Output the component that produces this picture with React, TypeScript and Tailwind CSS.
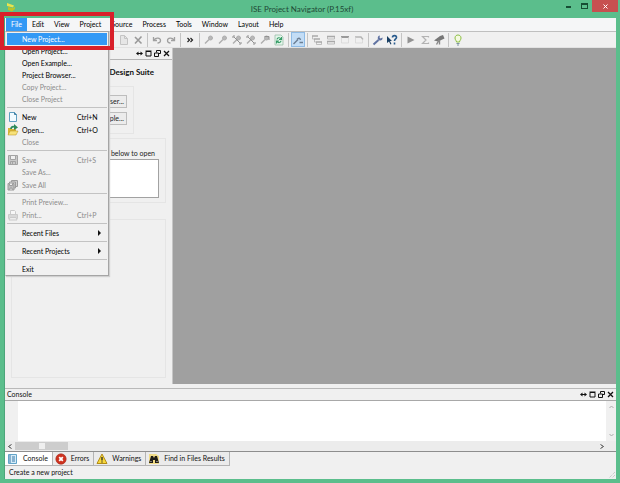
import type { ReactNode } from 'react';
import { clsx } from 'clsx';

const MENUS = ['File', 'Edit', 'View', 'Project', 'Source', 'Process', 'Tools', 'Window', 'Layout', 'Help'];

interface MenuEntry {
  label: string;
  shortcut?: string;
  disabled?: boolean;
  active?: boolean;
  submenu?: boolean;
  icon?: ReactNode;
}

function Icon({ children, className }: { children: ReactNode; className?: string }) {
  return (
    <svg
      className={clsx('h-3 w-3 shrink-0', className)}
      viewBox="0 0 12 12"
      fill="none"
      stroke="currentColor"
      aria-hidden="true"
    >
      {children}
    </svg>
  );
}

const newIcon = (
  <Icon>
    <path d="M2.5 1.5h5l2 2v7h-7z" fill="#f2fbff" stroke="#5f9fc0" />
    <path d="M7.5 1.5v2h2" stroke="#3e7ea3" />
  </Icon>
);

const openIcon = (
  <Icon>
    <path d="M1 4h3l1 1h4v6H1z" fill="#d9b534" stroke="none" />
    <path d="M3 7h8l-2 4H1z" fill="#f7e27a" stroke="#b48d1e" strokeWidth="0.5" />
    <path d="M4 5c0-2 2-3 4-2" stroke="#2b8a5a" strokeWidth="1.8" />
    <path d="M7 0l4 3.500L7 6z" fill="#2b8a5a" stroke="none" />
  </Icon>
);

const saveIcon = (
  <Icon className="text-[#a3a3a3]">
    <path d="M1.500 1.500h9v9h-9z" fill="#c9c9c9" />
    <path d="M3.500 1.500h5v4h-5z" fill="#f0f0f0" />
    <path d="M3.500 10.500v-3h5v3M5.500 8v2" />
  </Icon>
);

const saveAllIcon = (
  <Icon className="text-[#9c9c9c]">
    <path d="M4.500 1.500h6v6h-6z" fill="#d0d0d0" />
    <path d="M2.500 3h6v6h-6z" fill="#d0d0d0" />
    <path d="M1 4.500h6v6.500H1z" fill="#bcbcbc" />
    <path d="M2.500 4.500v2h3v-2M3 11V9h2v2" fill="#efefef" />
  </Icon>
);

const printIcon = (
  <Icon className="text-[#cacaca]">
    <path d="M3.500 5V1.500h4l1 1V5" fill="#f7f7f7" />
    <path d="M1.500 5.500h9v4h-9z" fill="#d8d8d8" />
    <path d="M3 8.500h6l1 2.500H2z" fill="#ededed" />
  </Icon>
);

const FILE_MENU: MenuEntry[][] = [
  [
    { label: 'New Project...', active: true },
    { label: 'Open Project...' },
    { label: 'Open Example...' },
    { label: 'Project Browser...' },
    { label: 'Copy Project...', disabled: true },
    { label: 'Close Project', disabled: true },
  ],
  [
    { label: 'New', shortcut: 'Ctrl+N', icon: newIcon },
    { label: 'Open...', shortcut: 'Ctrl+O', icon: openIcon },
    { label: 'Close', disabled: true },
  ],
  [
    { label: 'Save', shortcut: 'Ctrl+S', disabled: true, icon: saveIcon },
    { label: 'Save As...', disabled: true },
    { label: 'Save All', disabled: true, icon: saveAllIcon },
  ],
  [
    { label: 'Print Preview...', disabled: true },
    { label: 'Print...', shortcut: 'Ctrl+P', disabled: true, icon: printIcon },
  ],
  [{ label: 'Recent Files', submenu: true }],
  [{ label: 'Recent Projects', submenu: true }],
  [{ label: 'Exit' }],
];

function FileMenu() {
  return (
    <div
      role="menu"
      aria-label="File"
      className="absolute top-full left-0 z-10 w-[104px] border border-[#a5a5a5] border-l-[#e4e4e4] bg-[#f1f1f1] px-px pt-px shadow-[1px_1px_1px_#d0d0d0]"
    >
      {FILE_MENU.map((group, i) => (
        <div key={group[0].label}>
          {i > 0 && <div className="my-0.5 h-px bg-[#c3c3c3]" />}
          {group.map((item) => (
            <button
              key={item.label}
              type="button"
              role="menuitem"
              disabled={item.disabled}
              className={clsx(
                'flex w-full items-center text-[7px] leading-3',
                item.icon || group.length === 1 ? 'h-[13px]' : 'h-3',
                item.active && 'bg-[#3399f5] text-white',
                item.disabled ? 'text-[#8c8c8c]' : !item.active && 'text-black'
              )}
            >
              <span className="flex w-[15px] shrink-0">{item.icon}</span>
              <span className="flex-1 text-left whitespace-nowrap">{item.label}</span>
              {item.shortcut && <span className="w-[30px] text-left">{item.shortcut}</span>}
              {item.submenu && (
                <svg className="mr-1.5 h-[6px] w-[3px]" viewBox="0 0 3 6" aria-hidden="true">
                  <path d="M0 0l3 3-3 3z" fill="#111" />
                </svg>
              )}
            </button>
          ))}
        </div>
      ))}
    </div>
  );
}

function ToolButton({ label, children, active }: { label: string; children: ReactNode; active?: boolean }) {
  return (
    <button
      type="button"
      aria-label={label}
      className={clsx(
        'flex h-[15px] w-3.5 shrink-0 items-center justify-center',
        active && 'border border-[#8ebbe6] bg-[#c3ddf6]'
      )}
    >
      {children}
    </button>
  );
}

function Divider() {
  return <div className="mx-0.5 h-3.5 w-px shrink-0 bg-[#c4c4c4]" />;
}

function Magnifier({ children }: { children?: ReactNode }) {
  return (
    <Icon className="text-[#aeaeae]">
      <circle cx="7.500" cy="4" r="2" fill="#b8b8b8" />
      <path d="M6 5.500L2 9.500" strokeWidth="1.400" />
      {children}
    </Icon>
  );
}

function ToolBar() {
  return (
    <div className="flex h-4 items-center overflow-hidden border-b border-[#e2e2e2] bg-[#f0f0f0] pl-28" role="toolbar">
      <ToolButton label="Paste">
        <Icon className="text-[#c4c4c4]">
          <path d="M2.500 1.500h4l3 3v6h-7z" fill="#e6e6e6" />
          <path d="M6.500 1.500v3h3" />
        </Icon>
      </ToolButton>
      <ToolButton label="Delete">
        <Icon className="text-[#999]">
          <path d="M3 3l6.500 6.500M9.500 2.500L3 9.500" strokeWidth="1.600" />
        </Icon>
      </ToolButton>
      <Divider />
      <ToolButton label="Undo">
        <Icon className="text-[#a0a0a0]">
          <path d="M2.500 3v3.500H6M3 6c2-3 6.500-2 6.500.5C9.500 8.500 8 9 6.500 9" strokeWidth="1.300" />
        </Icon>
      </ToolButton>
      <ToolButton label="Redo">
        <Icon className="text-[#a0a0a0]">
          <path d="M9.500 3v3.500H6M9 6C7 3 2.500 4 2.500 6.500 2.500 8.500 4 9 5.500 9" strokeWidth="1.300" />
        </Icon>
      </ToolButton>
      <Divider />
      <ToolButton label="More tools">
        <Icon className="text-[#222]">
          <path d="M3.500 4l2 2-2 2M6.500 4l2 2-2 2" strokeWidth="1.200" />
        </Icon>
      </ToolButton>
      <Divider />
      <ToolButton label="Zoom in">
        <Magnifier />
      </ToolButton>
      <ToolButton label="Zoom out">
        <Magnifier />
      </ToolButton>
      <ToolButton label="Zoom to fit">
        <Magnifier>
          <path d="M2 4V2h2M10 8v2H8M3 3l6 6" stroke="#929292" />
        </Magnifier>
      </ToolButton>
      <ToolButton label="Zoom to box">
        <Magnifier>
          <path d="M2 4V2h2M10 8v2H8M3 3l6 6" stroke="#929292" />
        </Magnifier>
      </ToolButton>
      <ToolButton label="Zoom to selection">
        <Magnifier>
          <path d="M5.500 2.500H10V6" stroke="#929292" />
        </Magnifier>
      </ToolButton>
      <ToolButton label="Refresh">
        <Icon className="text-[#359c66]">
          <path d="M2 1h6l2 2v8H2z" fill="#e4f5ea" stroke="#8fb8a0" strokeWidth="0.700" />
          <path d="M4 5.500c0-2 3-2.500 4-.500M8.500 3v2.500H6M8 6.800c0 2-3 2.500-4 .5M3.500 9.500V7H6" strokeWidth="1.100" />
        </Icon>
      </ToolButton>
      <Divider />
      <ToolButton label="Highlight" active>
        <Icon className="text-[#6c7f94]">
          <path d="M1.500 10L6 5.500" strokeWidth="1.500" />
          <path d="M5 5.500c1.500-2 3-1.500 3.500.5M7.500 8.500h3.500" strokeWidth="1.400" />
        </Icon>
      </ToolButton>
      <Divider />
      <ToolButton label="Cascade">
        <Icon className="text-[#a9a9a9]">
          <path d="M1 2h6M3 5h6M5 8h6" strokeWidth="1.600" />
          <path d="M1.500 2v3H3M3.500 5v3H5M5.500 8v2.500h5V8" strokeWidth="0.700" />
        </Icon>
      </ToolButton>
      <ToolButton label="Tile horizontally">
        <Icon className="text-[#a9a9a9]">
          <path d="M2 2.500h8M2 7.500h8" strokeWidth="1.400" />
          <path d="M2.500 3v2h7V3M2.500 8v2h7V8" strokeWidth="0.700" />
        </Icon>
      </ToolButton>
      <ToolButton label="Tile vertically">
        <Icon className="text-[#909090]">
          <path d="M2 3h8" strokeWidth="1.800" />
          <path d="M2.500 3v6h7V3" stroke="#d2d2d2" strokeWidth="0.700" />
        </Icon>
      </ToolButton>
      <ToolButton label="Restore window">
        <Icon className="text-[#b4b4b4]">
          <path d="M2 3h6l2 2.500" strokeWidth="1.400" />
          <path d="M2.500 3v6h7V5.500" stroke="#d2d2d2" strokeWidth="0.700" />
        </Icon>
      </ToolButton>
      <Divider />
      <ToolButton label="Settings">
        <Icon className="text-[#6073a2]">
          <path d="M1.500 10.500L6.500 6" strokeWidth="2" />
          <path d="M8 1.500C5.500 1.500 5 5 7 6.200c2 .8 4-.5 3.500-2.700L8.500 4.500 7.500 3.500z" fill="currentColor" stroke="none" />
        </Icon>
      </ToolButton>
      <ToolButton label="What's this">
        <Icon>
          <path d="M1 2v7l2-1.500 1.500 3 1-.5-1.500-3H6z" fill="#183e63" stroke="none" />
          <path d="M6.500 3.500c0-2.500 4-2.500 4 0 0 1.500-2 1.500-2 3.500M8.500 8.500v2" stroke="#285b8d" strokeWidth="1.600" />
        </Icon>
      </ToolButton>
      <Divider />
      <ToolButton label="Run">
        <Icon>
          <path d="M2.500 2.500l7 3.500-7 3.500z" fill="#929292" stroke="none" />
        </Icon>
      </ToolButton>
      <ToolButton label="Summary">
        <Icon className="text-[#b3b3b3]">
          <path d="M9.500 3.500v-1h-6L7 6 3.500 9.500h6v-1" strokeWidth="1.200" />
        </Icon>
      </ToolButton>
      <ToolButton label="Analyze">
        <Icon>
          <path d="M1 6.500L7 2l3-1 1.500 3.500L5 7.500z" fill="#777" stroke="none" />
          <path d="M6 6L3.500 10.500M6.500 6v4.500" stroke="#888" strokeWidth="1.400" />
        </Icon>
      </ToolButton>
      <Divider />
      <ToolButton label="Tip of the day">
        <Icon>
          <path d="M4.500 8C4.500 6.500 3 6 3 4c0-4 6-4 6 0 0 2-1.500 2.500-1.500 4z" fill="#f4fadf" stroke="#8dbf45" />
          <path d="M4.500 9.500h3M5 11h2" stroke="#7d93a0" />
        </Icon>
      </ToolButton>
    </div>
  );
}

function PanelControls() {
  return (
    <div className="flex gap-0.5 text-[#111]">
      <button type="button" aria-label="Slide">
        <svg className="h-[7px] w-[7px]" viewBox="0 0 7 7" aria-hidden="true">
          <path d="M0 3.500L2.500 1.500v4zM7 3.500L4.500 1.500v4z" fill="currentColor" />
          <path d="M1 3.500h5" stroke="currentColor" />
        </svg>
      </button>
      <button type="button" aria-label="Maximize panel">
        <svg className="h-[7px] w-[7px]" viewBox="0 0 7 7" fill="none" stroke="currentColor" aria-hidden="true">
          <path d="M1 1.500h5v4.500H1zM.500 1h6" />
        </svg>
      </button>
      <button type="button" aria-label="Float panel">
        <svg className="h-[7px] w-[7px]" viewBox="0 0 7 7" fill="none" stroke="currentColor" aria-hidden="true">
          <path d="M2.500 2.500v-2h4v3H5M.500 3h4v3.500h-4z" />
        </svg>
      </button>
      <button type="button" aria-label="Close panel">
        <svg className="h-[7px] w-[7px]" viewBox="0 0 7 7" stroke="currentColor" aria-hidden="true">
          <path d="M1 1l5 5M6 1L1 6" strokeWidth="1.300" />
        </svg>
      </button>
    </div>
  );
}

function StartPanel() {
  return (
    <aside className="flex w-[168px] shrink-0 flex-col border-r border-[#c6c6c6] bg-[#f0f0f0]">
      <div className="flex h-3 items-center justify-end border-b border-[#b5b5b5] pr-0.5">
        <PanelControls />
      </div>
      <div className="flex flex-1 flex-col px-1.5 pb-1.5 text-[7px] leading-3 text-[#222]">
        <h1 className="mt-1.5 flex justify-end pr-3 text-[8px] font-bold whitespace-nowrap text-[#111]">
          Design Suite
        </h1>
        <div className="mt-2 mr-8 flex flex-col items-end gap-1 border border-[#e5e5e5] py-2 pr-1.5">
          <button type="button" className="h-[13px] border border-[#bdbdbd] bg-[#ececec] px-0.5 leading-[11px]">
            Browser...
          </button>
          <button type="button" className="h-[13px] border border-[#bdbdbd] bg-[#ececec] px-0.5 leading-[11px]">
            Example...
          </button>
        </div>
        <div className="mt-1 border border-[#e5e5e5] pt-2 pr-1.5 pb-1">
          <label htmlFor="recent" className="flex justify-end pr-1 whitespace-nowrap">
            list below to open
          </label>
          <textarea
            id="recent"
            readOnly
            className="block h-[39px] w-full resize-none border border-[#a2a2a2] bg-white"
          />
        </div>
        <div className="mt-4 flex-1 border border-[#e5e5e5]" />
      </div>
    </aside>
  );
}

const TABS = [
  {
    label: 'Console',
    icon: (
      <Icon>
        <path d="M1.500 1.500h8v9h-8z" fill="#d5ebf7" stroke="#62a4c9" />
        <path d="M3 2v8M5 4h3M5 6h3M5 8h3" stroke="#3879a8" />
      </Icon>
    ),
  },
  {
    label: 'Errors',
    icon: (
      <Icon>
        <circle cx="6" cy="6" r="5.200" fill="#ce321f" stroke="#a52a1c" strokeWidth="0.600" />
        <path d="M4.200 4.200l3.600 3.600M7.800 4.200L4.200 7.800" stroke="#fff" strokeWidth="1.800" />
      </Icon>
    ),
  },
  {
    label: 'Warnings',
    icon: (
      <Icon>
        <path d="M6 1l5 9.500H1z" fill="#f8d83b" stroke="#b28c16" />
        <path d="M6 4v3.500M6 8.500v1" stroke="#222" strokeWidth="1.300" />
      </Icon>
    ),
  },
  {
    label: 'Find in Files Results',
    icon: (
      <Icon>
        <path d="M1 1h7l3 2v8H1z" fill="#f1dc87" stroke="none" />
        <path d="M3 3h2l1 2 1-2h2l2 7H7V7H5v3H1z" fill="#201d18" stroke="none" />
        <path d="M2.500 8.500h1M8.500 8.500h1" stroke="#ddd" />
      </Icon>
    ),
  },
];

function ConsolePanel() {
  return (
    <section aria-label="Console" className="mt-1 border-t border-[#b9b9b9]">
      <div className="flex h-3 items-center justify-between border-b border-[#a8a8a8] pr-0.5 pl-0.5">
        <h2 className="text-[7px] text-[#111]">Console</h2>
        <PanelControls />
      </div>
      <div className="flex h-10 bg-white">
        <div className="w-[13px] bg-[#f0f0f0]" />
        <div className="flex-1" />
        <div className="flex w-2.5 flex-col items-center justify-between bg-[#f0f0f0] py-1 text-[#aaa]">
          <svg className="h-1 w-[5px]" viewBox="0 0 5 4" fill="none" stroke="currentColor" aria-hidden="true">
            <path d="M.500 3l2-2 2 2" />
          </svg>
          <svg className="h-1 w-[5px]" viewBox="0 0 5 4" fill="none" stroke="currentColor" aria-hidden="true">
            <path d="M.500 1l2 2 2-2" />
          </svg>
        </div>
      </div>
      <div className="flex h-[11px] items-center border-b border-[#8e8e8e] bg-[#ececec] pr-3">
        <svg className="mx-[3px] h-[5px] w-1" viewBox="0 0 4 5" fill="none" stroke="#444" aria-hidden="true">
          <path d="M3.500.500l-3 2 3 2" />
        </svg>
        <div className="flex h-2 w-[53px] items-center justify-center bg-[#cdcdcd]">
          <div className="h-1.5 w-1.5 bg-[#efefef]" />
        </div>
        <div className="flex-1" />
        <svg className="h-[5px] w-1" viewBox="0 0 4 5" fill="none" stroke="#444" aria-hidden="true">
          <path d="M.500.500l3 2-3 2" />
        </svg>
      </div>
      <div role="tablist" className="flex h-3.5 text-[7px] text-[#111]">
        {TABS.map((tab, i) => (
          <button
            key={tab.label}
            type="button"
            role="tab"
            aria-selected={i === 0}
            className={clsx(
              'flex items-center gap-1 border-r border-b border-[#b4b4b4] pr-1 pl-0.5 whitespace-nowrap',
              i === 0 ? 'bg-white' : 'bg-[#ebebeb]'
            )}
          >
            {tab.icon}
            {tab.label}
          </button>
        ))}
      </div>
    </section>
  );
}

export default function App() {
  return (
    <div className="flex min-h-screen flex-col bg-[#5bbe8c] font-[Lato,'Open_Sans',sans-serif]">
      <header className="flex h-[18px] items-start pl-1.5">
        <svg className="mt-0.5 h-2.5 w-2.5" viewBox="0 0 10 10" aria-hidden="true">
          <path d="M1 1l7 2.500-1 2-6-1.500z" fill="#e9e34d" />
          <path d="M2 5l5 1 2-1.500V7L6 9.500 2 8z" fill="#b7c52c" />
        </svg>
        <div className="flex-1 pl-7 text-center text-[8px] leading-[18px] text-[#1f4936]">
          ISE Project Navigator (P.15xf)
        </div>
        <div className="mr-0.5 flex h-3">
          <button type="button" aria-label="Minimize" className="flex w-4 items-end justify-center pb-1">
            <span className="h-0.5 w-[5px] bg-[#164d34]" />
          </button>
          <button type="button" aria-label="Maximize" className="flex w-4 items-center justify-center">
            <span className="h-[6px] w-[7px] border border-t-2 border-[#164d34]" />
          </button>
          <button type="button" aria-label="Close" className="flex w-[26px] items-center justify-center bg-[#c75050]">
            <svg className="h-[5px] w-[5px]" viewBox="0 0 5 5" stroke="#fff" aria-hidden="true">
              <path d="M.500.500l4 4M4.500.500l-4 4" />
            </svg>
          </button>
        </div>
      </header>

      <div className="mr-1 mb-1 ml-1 flex flex-1 flex-col border-l border-[#4da67b] bg-[#f0f0f0]">
        <nav className="relative flex h-3.5 border-b border-[#bfbfbf] bg-[#f5f6f7] pl-px text-[7px] text-black">
          {MENUS.map((menu) => (
            <button
              key={menu}
              type="button"
              className={clsx('px-[5px]', menu === 'File' && 'bg-[#3399f5] text-white')}
            >
              {menu}
            </button>
          ))}
          <FileMenu />
        </nav>
        <ToolBar />
        <div className="flex flex-1">
          <StartPanel />
          <main className="flex-1 bg-[#a0a0a0]" />
        </div>
        <ConsolePanel />
        <footer className="flex h-[13px] items-center justify-between pl-1 text-[7px] text-[#111]">
          <span>Create a new project</span>
          <svg className="h-2 w-2 self-end" viewBox="0 0 8 8" stroke="#bbb" aria-hidden="true">
            <path d="M7 1L1 7M7 4L4 7" strokeDasharray="1 1" />
          </svg>
        </footer>
      </div>

      {/* Callout around the File menu and New Project entry */}
      <div className="pointer-events-none absolute top-3 left-0 z-20 h-[38px] w-[114px] border-4 border-[#d9202a]" />
    </div>
  );
}
